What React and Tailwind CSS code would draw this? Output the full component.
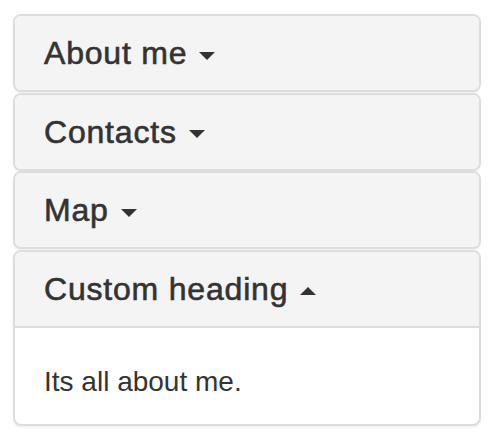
import { useState } from 'react';

// ── caret ────────────────────────────────────────────────────────────────────

function Caret({ up }) {
  return (
    <span
      className={
        up
          ? 'inline-block ml-[12px] align-middle w-0 h-0 border-x-[8px] border-x-transparent border-b-[8px] border-b-[#333]'
          : 'inline-block ml-[12px] align-middle w-0 h-0 border-x-[8px] border-x-transparent border-t-[8px] border-t-[#333]'
      }
    />
  );
}

// ── panel ────────────────────────────────────────────────────────────────────

function Panel({ title, open, onToggle, children }) {
  return (
    <div className="rounded-[8px] border-2 border-[#ddd] bg-white shadow-[0_2px_2px_rgba(0,0,0,0.05)] overflow-hidden">
      <div
        onClick={onToggle}
        className={
          open
            ? 'bg-[#f4f4f4] px-[29px] pt-[20px] pb-[19px] border-b-2 border-[#ddd] cursor-pointer'
            : 'bg-[#f4f4f4] px-[29px] pt-[20px] pb-[19px] cursor-pointer'
        }
      >
        <h4 className="text-[32px] leading-[35px] font-medium tracking-[0.8px] [-webkit-text-stroke:0.6px_#333] text-[#333]">
          {title}
          <Caret up={open} />
        </h4>
      </div>
      {open && (
        <div className="px-[29px] pt-[34px] pb-[22px] text-[28px] leading-[40px] text-[#333]">
          {children}
        </div>
      )}
    </div>
  );
}

// ── page ─────────────────────────────────────────────────────────────────────

export default function App() {
  const [open, setOpen] = useState(3);
  const panels = [
    { title: 'About me', body: 'Its all about me.' },
    { title: 'Contacts', body: 'Contact details.' },
    { title: 'Map', body: 'Map goes here.' },
    { title: 'Custom heading', body: 'Its all about me.' },
  ];

  return (
    <div
      className="w-[494px] h-[444px] bg-white pt-[14px] px-[13px]"
      style={{ fontFamily: '"Liberation Sans", Arial, sans-serif' }}
    >
      <div className="w-[468px] flex flex-col gap-[0.5px]">
        {panels.map((p, i) => (
          <Panel
            key={p.title}
            title={p.title}
            open={open === i}
            onToggle={() => setOpen(open === i ? null : i)}
          >
            {p.body}
          </Panel>
        ))}
      </div>
    </div>
  );
}
